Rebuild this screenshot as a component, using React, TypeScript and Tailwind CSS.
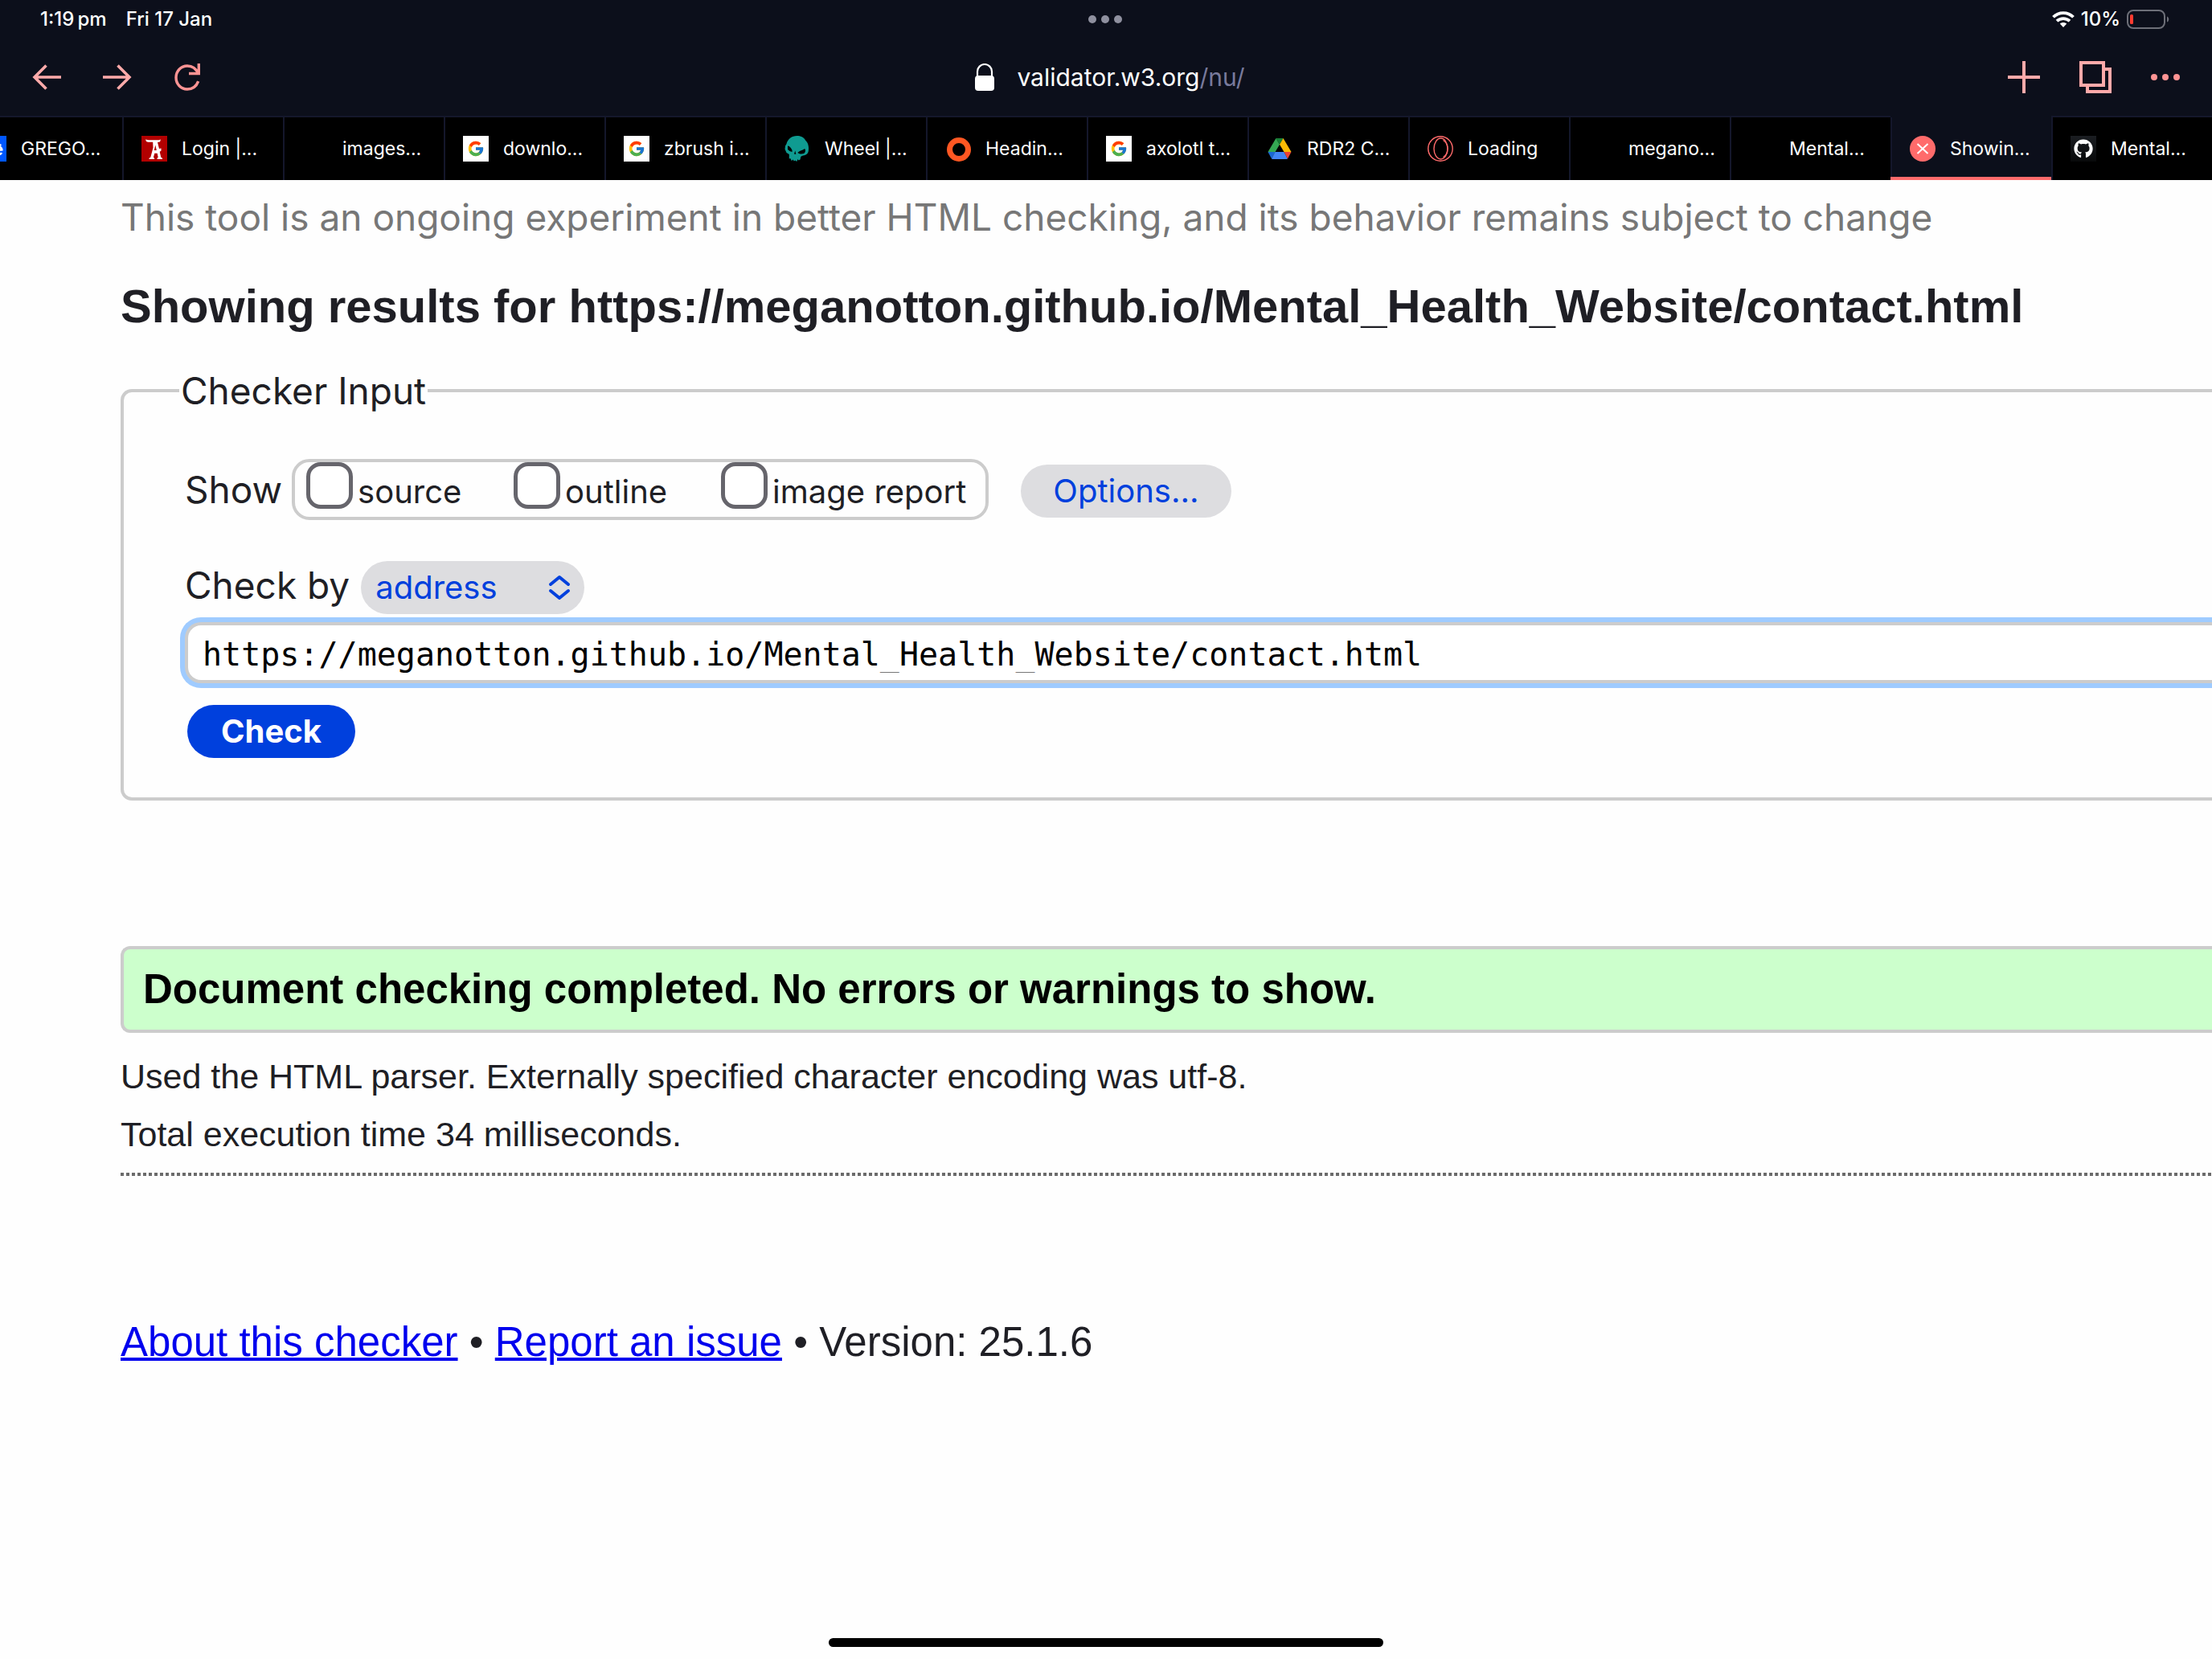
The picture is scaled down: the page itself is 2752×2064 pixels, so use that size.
import React from "react";
import { FcGoogle } from "react-icons/fc";
import { FaGithub } from "react-icons/fa";

const accent = "#ffaaaa";

function BehanceIcon() {
  return (
    <svg viewBox="0 0 32 32" className="h-8 w-8">
      <rect width="32" height="32" fill="#0057ff" />
      <path
        d="M18 11.500h7.500M17 17.500h9.500M26.500 18.500c0-3-1.800-4.700-4.500-4.700s-5 1.800-5 4.700 2 4.700 5 4.700c2 0 3.400-.8 4-2.200"
        fill="none"
        stroke="#fff"
        strokeWidth="2.400"
      />
    </svg>
  );
}

function LoginIcon() {
  return (
    <svg viewBox="0 0 32 32" className="h-8 w-8">
      <rect width="32" height="32" fill="#b20000" />
      <path
        fill="#fff"
        d="M5 4.500l4 .8h12.500l2.500-.8-1 3-3 .5 2 8 2.500-.5v3l-1.800 1.200 1.600 7 1.700 1v1.300h-6.500v-1.300l1.200-1-1-5h-3.400l-1.400 5 1.200 1v1.300H9.500v-1.300l1.800-1 3.200-12-.3-7H8L6 7zM17.300 11.500l-1.500 6.500h3z"
      />
    </svg>
  );
}

function GoogleIcon() {
  return (
    <span className="flex h-8 w-8 items-center justify-center bg-white">
      <FcGoogle size={22} />
    </span>
  );
}

function SkullIcon() {
  return (
    <svg viewBox="0 0 32 32" className="h-8 w-8">
      <path
        fill="#0f9b91"
        d="M15.500 0c4.500 0 8.500 1.500 10.500 5.500 4 3.500 4.500 9 3.800 13.500-.4 3.200-2.500 4.200-5 5.200-2.300.5-4 .8-4.500 1.800l-.8 3.500-2 1-1-1.500-1.200 3-2-1.500-1.500 1-1-2-2 1.500-1.500-3-1.500.5v-5.500L2.500 21 .5 16.500 1 12.500l1.500-2.500C4 4 9 0 15.500 0z"
      />
      <path fill="#000" d="M4 12.500c2 0 3 1.500 4.500 3.500 1 1.500 1.300 2.500 1 4l-3-1-2.500-2zM16.500 21c1.200-2.200 5.500-2.500 8.700-5 1.500 2 .8 4.800-1 6-2.500.8-5.500.8-7.700-1zM13.300 18.500l1 4.500-2.300-.5z" />
    </svg>
  );
}

function RingIcon() {
  return (
    <svg viewBox="0 0 32 32" className="h-8 w-8">
      <circle cx="17" cy="17" r="11.500" fill="none" stroke="#ff5722" strokeWidth="7" />
    </svg>
  );
}

function DriveIcon() {
  return (
    <svg viewBox="0 0 32 32" className="h-8 w-8">
      <path fill="#34a853" d="M11.500 3L16 10.800 7 26 1.500 20z" />
      <path fill="#188038" d="M11.500 3h9L16 10.800z" />
      <path fill="#fbbc04" d="M20.500 3L30.500 20h-9L16 10.800z" />
      <path fill="#1967d2" d="M1.500 20h9L6 28.500z" />
      <path fill="#4285f4" d="M10.500 20h11l4.500 8.500c-.8.500-1.500.5-2 .5H8c-.7 0-1.500-.1-2-.5z" />
      <path fill="#ea4335" d="M21.500 20h9L26 28.500z" />
    </svg>
  );
}

function OperaIcon() {
  return (
    <svg viewBox="0 0 32 32" className="h-8 w-8" fill="none" stroke="#ff6b6b" strokeWidth="1.400">
      <circle cx="16" cy="16" r="15.200" />
      <ellipse cx="16.500" cy="16" rx="8.500" ry="13" />
      <path d="M19.500 5.500c3.500 2 5.500 6 5.500 10.500s-2 8.500-5.500 10.500" />
    </svg>
  );
}

function ErrorIcon() {
  return (
    <svg viewBox="0 0 32 32" className="h-8 w-8">
      <circle cx="16" cy="16" r="16" fill="#ff6b6b" />
      <path d="M9.500 10l13 12M22.500 10l-13 12" stroke="#fff" strokeWidth="2" />
    </svg>
  );
}

function GithubIcon() {
  return (
    <span className="flex h-8 w-8 items-center justify-center bg-linear-to-b from-[#1b1e22] to-[#08090a] text-white">
      <FaGithub size={24} />
    </span>
  );
}

function Blank() {
  return <span className="h-8 w-8" />;
}

const tabs: { title: string; Icon: () => React.ReactElement; active?: boolean }[] = [
  { title: "GREGO...", Icon: BehanceIcon },
  { title: "Login |...", Icon: LoginIcon },
  { title: "images...", Icon: Blank },
  { title: "downlo...", Icon: GoogleIcon },
  { title: "zbrush i...", Icon: GoogleIcon },
  { title: "Wheel |...", Icon: SkullIcon },
  { title: "Headin...", Icon: RingIcon },
  { title: "axolotl t...", Icon: GoogleIcon },
  { title: "RDR2 C...", Icon: DriveIcon },
  { title: "Loading", Icon: OperaIcon },
  { title: "megano...", Icon: Blank },
  { title: "Mental...", Icon: Blank },
  { title: "Showin...", Icon: ErrorIcon, active: true },
  { title: "Mental...", Icon: GithubIcon },
];

function StatusBar() {
  return (
    <div className="grid h-12 grid-cols-3 items-center pr-[52px] pl-[50px] text-[24px] leading-[30px] font-medium text-white">
      <div className="flex gap-6">
        <span>1:19{"\u2009"}pm</span>
        <span>Fri 17 Jan</span>
      </div>
      <svg viewBox="0 0 42 10" className="h-[10px] w-[42px] justify-self-center" fill="#8f909f">
        <circle cx="5" cy="5" r="5" />
        <circle cx="21" cy="5" r="5" />
        <circle cx="37" cy="5" r="5" />
      </svg>
      <div className="flex items-center gap-2 justify-self-end">
        <svg viewBox="0 0 28 20" className="h-5 w-7" fill="none" stroke="#fff" strokeWidth="3.800">
          <path d="M1.500 7.300C8.300.3 19.700.3 26.500 7.300" />
          <path d="M6 12.200c4.500-4.200 11.500-4.200 16 0" />
          <path d="M14 20l-4.200-4.400c2.500-2 5.900-2 8.400 0z" fill="#fff" stroke="none" />
        </svg>
        <span>10%</span>
        <svg viewBox="0 0 54 24" className="h-6 w-[54px]">
          <rect x="1" y="1" width="46" height="22" rx="7" fill="none" stroke="#6d6f78" strokeWidth="2" />
          <path d="M50 8.500c3 1 3 6 0 7z" fill="#6d6f78" />
          <rect x="4" y="6" width="4" height="12" rx="1.500" fill="#ff3b30" />
        </svg>
      </div>
    </div>
  );
}

function Toolbar() {
  return (
    <div className="grid h-24 grid-cols-3 items-center px-10">
      <div className="flex items-center gap-[50px]">
        <button type="button" aria-label="Back">
          <svg viewBox="0 0 38 32" className="h-8 w-[38px]" fill="none" stroke={accent} strokeWidth="3.600">
            <path d="M36 16H3M17.500 1.500L3 16l14.500 14.500" />
          </svg>
        </button>
        <button type="button" aria-label="Forward">
          <svg viewBox="0 0 38 32" className="h-8 w-[38px]" fill="none" stroke={accent} strokeWidth="3.600">
            <path d="M0 16h33M18.500 1.500L33 16 18.500 30.500" />
          </svg>
        </button>
        <button type="button" aria-label="Reload">
          <svg viewBox="0 0 34 34" className="h-[34px] w-[34px]" fill="none" stroke="#ff9494" strokeWidth="3.400">
            <path d="M31.300 0v12.500H19M30.500 12.500C28 6.500 23 3 17 3 9 3 3 9.500 3 17.500S9 32 17 32c6.500 0 11.500-4 13.700-9.800" />
          </svg>
        </button>
      </div>
      <div className="flex items-center gap-7 justify-self-center pl-[10px]">
        <svg viewBox="0 0 24 34" className="h-[34px] w-6">
          <path d="M3 18V10a9 9 0 0 1 18 0v8" fill="none" stroke="#fff" strokeWidth="2.200" />
          <rect y="15" width="24" height="19" rx="4" fill="#fff" />
        </svg>
        <span className="text-[30px] leading-10 text-white">
          validator.w3.org<span className="text-[#787a9c]">/nu/</span>
        </span>
      </div>
      <div className="flex items-center gap-[49px] justify-self-end">
        <button type="button" aria-label="New tab">
          <svg viewBox="0 0 40 40" className="h-10 w-10" stroke={accent} strokeWidth="4">
            <path d="M20 0v40M0 20h40" />
          </svg>
        </button>
        <button type="button" aria-label="Show tabs">
          <svg viewBox="0 0 40 40" className="h-10 w-10" fill="none" stroke={accent} strokeWidth="4">
            <path d="M2 2h28v28H2zM32 10h6v28H10v-6" />
          </svg>
        </button>
        <button type="button" aria-label="Menu">
          <svg viewBox="0 0 36 8" className="h-2 w-9" fill="#ff9494">
            <circle cx="4" cy="4" r="4" />
            <circle cx="18" cy="4" r="4" />
            <circle cx="32" cy="4" r="4" />
          </svg>
        </button>
      </div>
    </div>
  );
}

function TabStrip() {
  return (
    <div role="tablist" className="flex h-20 justify-end overflow-hidden">
      {tabs.map(({ title, Icon, active }, i) => (
        <button
          key={i}
          type="button"
          role="tab"
          aria-selected={!!active}
          className={
            active
              ? "flex w-[200px] shrink-0 flex-col border-t-2 border-[#0c0f1b] bg-[#0c0f1b] text-white"
              : "flex w-[200px] shrink-0 flex-col border-t-2 border-[#14172b] bg-black text-white"
          }
        >
          <span className="flex w-full flex-1 items-center gap-[18px] border-l-2 border-[#14172b] pl-[22px] text-[23px] leading-[30px] whitespace-nowrap">
            <Icon />
            {title}
          </span>
          {active && <span className="-mt-1 h-1 w-full bg-[#ff6b6b]" />}
        </button>
      ))}
    </div>
  );
}

const outputs = ["source", "outline", "image report"];

export default function App() {
  return (
    <div className="flex min-h-screen flex-col overflow-hidden bg-[#fefefe] font-['Inter',sans-serif] text-[#1f1f25]">
      <header className="bg-[#0c0f1b]">
        <StatusBar />
        <Toolbar />
        <TabStrip />
      </header>

      <main className="pl-[150px]">
        <p className="pt-[18px] text-[46px] leading-[56px] text-[#777777]">
          This tool is an ongoing experiment in better HTML checking, and its behavior remains subject to change
        </p>
        <h1 className="mt-12 font-['Liberation_Sans',sans-serif] text-[58px] leading-[70px] font-bold whitespace-nowrap">
          Showing results for https://meganotton.github.io/Mental_Health_Website/contact.html
        </h1>

        <form onSubmit={(e) => e.preventDefault()}>
          <fieldset className="mt-[42px] rounded-l-[14px] border-4 border-r-0 border-[#cccccc] pb-[49px] pl-[69px]">
            <legend className="px-[2px] text-[46px] leading-[56px]">Checker Input</legend>

            <div className="mt-[57px] flex items-center pl-[7px]">
              <span className="text-[46px] leading-[56px]">Show</span>
              <div className="ml-3 flex rounded-[22px] border-4 border-[#cccccc] pr-6 pb-[2px] pl-[14px]">
                {outputs.map((name) => (
                  <label key={name} className="flex min-w-[258px] items-start gap-[6px]">
                    <input
                      type="checkbox"
                      className="h-[58px] w-[58px] shrink-0 appearance-none rounded-[18px] border-[5px] border-[#66656c] bg-white"
                    />
                    <span className="mt-2 text-[40px] leading-[58px] whitespace-nowrap">{name}</span>
                  </label>
                ))}
              </div>
              <button
                type="button"
                className="mt-1 ml-10 h-[66px] rounded-[33px] bg-[#dddde0] px-10 text-[40px] leading-[66px] text-[#0040dd]"
              >
                Options...
              </button>
            </div>

            <div className="mt-[51px] flex items-baseline pl-[7px]">
              <label htmlFor="docselect" className="text-[46px] leading-[56px]">
                Check by
              </label>
              <div className="relative ml-[14px]">
                <select
                  id="docselect"
                  className="h-[66px] w-[278px] appearance-none rounded-[33px] bg-[#dddde0] pl-[18px] text-[40px] leading-[66px] text-[#0040dd]"
                >
                  <option>address</option>
                </select>
                <svg
                  viewBox="0 0 28 32"
                  className="pointer-events-none absolute top-[17px] right-[17px] h-8 w-7"
                  fill="none"
                  stroke="#0040dd"
                  strokeWidth="4"
                  strokeLinecap="round"
                  strokeLinejoin="round"
                >
                  <path d="M3 12L14 3l11 9M3 20l11 9 11-9" />
                </svg>
              </div>
            </div>

            <div className="mt-[10px] pl-[7px]">
              <input
                type="text"
                aria-label="Address of page to check"
                defaultValue="https://meganotton.github.io/Mental_Health_Website/contact.html"
                className="block h-[76px] w-full rounded-l-[20px] border-4 border-r-0 border-[#cccccc] bg-white pt-1 pl-[18px] font-['DejaVu_Sans_Mono',monospace] text-[40px] leading-[60px] text-black shadow-[0_0_0_6px_#9fcbff] outline-none"
              />
              <button
                type="submit"
                className="mt-[27px] ml-[3px] block h-[66px] rounded-[33px] bg-[#0040dd] px-[42px] text-[40px] leading-[66px] font-bold text-white"
              >
                Check
              </button>
            </div>
          </fieldset>
        </form>

        <section className="mt-[181px] font-['Liberation_Sans',sans-serif]">
          <p className="rounded-l-[12px] border-4 border-r-0 border-[#cccccc] bg-[#ccffcc] pl-6 text-[51px] leading-[100px] font-bold text-black">
            Document checking completed. No errors or warnings to show.
          </p>
          <p className="mt-[18px] text-[43px] leading-[72px]">
            Used the HTML parser. Externally specified character encoding was utf-8.
          </p>
          <p className="text-[43px] leading-[72px]">Total execution time 34 milliseconds.</p>
          <div className="mt-3 h-1 bg-[repeating-linear-gradient(90deg,#6b6b6b_0_4px,transparent_4px_7px)]" />
        </section>

        <footer className="mt-[171px] font-['Liberation_Sans',sans-serif] text-[51px] leading-[72px]">
          <a href="#about" className="text-[#0000ee] underline decoration-[4px]">About this checker</a>
          {" • "}
          <a href="#issues" className="text-[#0000ee] underline decoration-[4px]">Report an issue</a>
          {" • Version: 25.1.6"}
        </footer>
      </main>

      <div className="mx-auto mt-auto mb-[15px] h-[11px] w-[690px] rounded-full bg-black" />
    </div>
  );
}
